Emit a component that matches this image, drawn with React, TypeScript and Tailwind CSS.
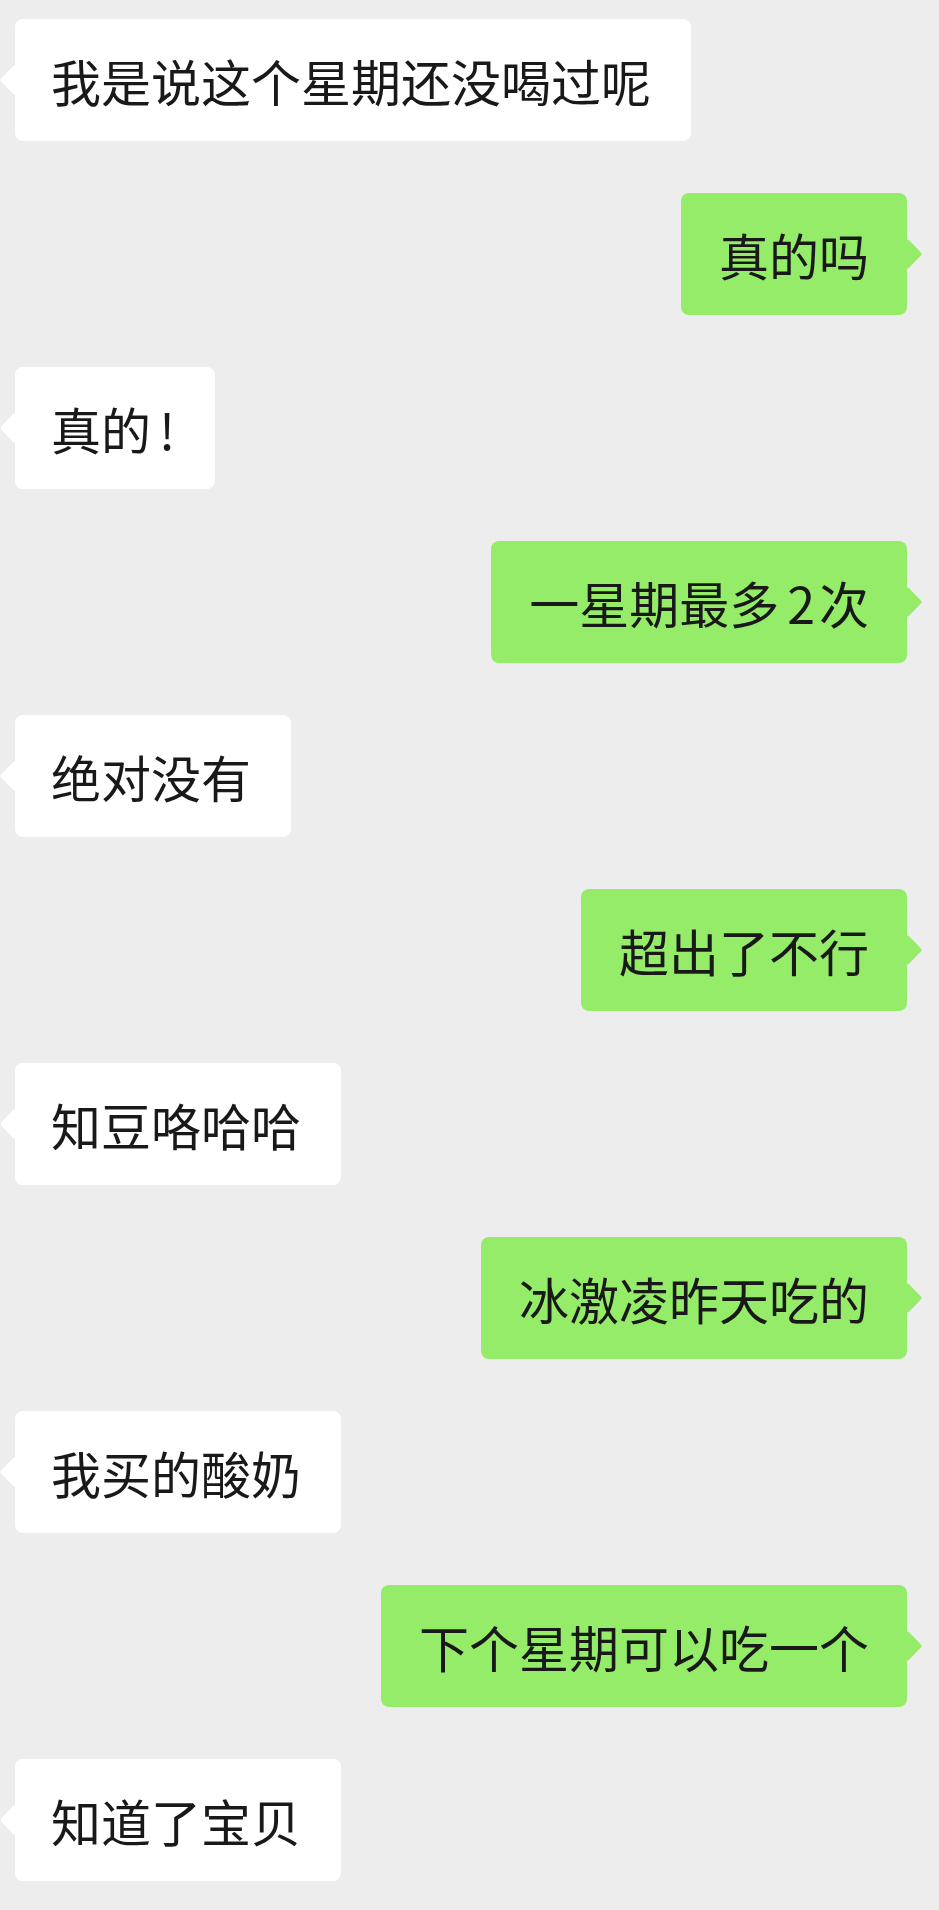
import type { ReactNode } from "react";

type Side = "left" | "right";

interface Message {
  side: Side;
  text: ReactNode;
}

const MESSAGES: Message[] = [
  { side: "left", text: "我是说这个星期还没喝过呢" },
  { side: "right", text: "真的吗" },
  {
    side: "left",
    text: (
      <>
        真的<span className="ml-[8px]">!</span>
      </>
    ),
  },
  {
    side: "right",
    text: (
      <>
        一星期最多<span className="ml-[8px] mr-[4px]">2</span>次
      </>
    ),
  },
  { side: "left", text: "绝对没有" },
  { side: "right", text: "超出了不行" },
  { side: "left", text: "知豆咯哈哈" },
  { side: "right", text: "冰激凌昨天吃的" },
  { side: "left", text: "我买的酸奶" },
  { side: "right", text: "下个星期可以吃一个" },
  { side: "left", text: "知道了宝贝" },
];

function Bubble({ side, text }: Message) {
  const mine = side === "right";
  return (
    <div className={mine ? "flex justify-end pr-[32px]" : "flex justify-start pl-[15px]"}>
      <div
        className={
          mine
            ? "relative rounded-[8px] bg-[#95ec69] px-[38px] py-[36px]"
            : "relative rounded-[8px] bg-white pl-[36px] pr-[40px] py-[36px]"
        }
      >
        {/* tail */}
        <span
          className={
            mine
              ? "absolute right-[-11px] top-1/2 h-[22px] w-[22px] -translate-y-1/2 rotate-45 rounded-[3px] bg-[#95ec69]"
              : "absolute left-[-11px] top-1/2 h-[22px] w-[22px] -translate-y-1/2 rotate-45 rounded-[3px] bg-white"
          }
        />
        <p className="relative whitespace-nowrap text-[50px] leading-[50px] text-[#191919]">{text}</p>
      </div>
    </div>
  );
}

export default function App() {
  return (
    <div
      className="min-h-[1910px] w-full bg-[#ededed] pt-[19px]"
      style={{ fontFamily: '"Noto Sans CJK SC", "Noto Sans", sans-serif' }}
    >
      <div className="flex flex-col gap-[52px]">
        {MESSAGES.map((m, i) => (
          <Bubble key={i} side={m.side} text={m.text} />
        ))}
      </div>
    </div>
  );
}
